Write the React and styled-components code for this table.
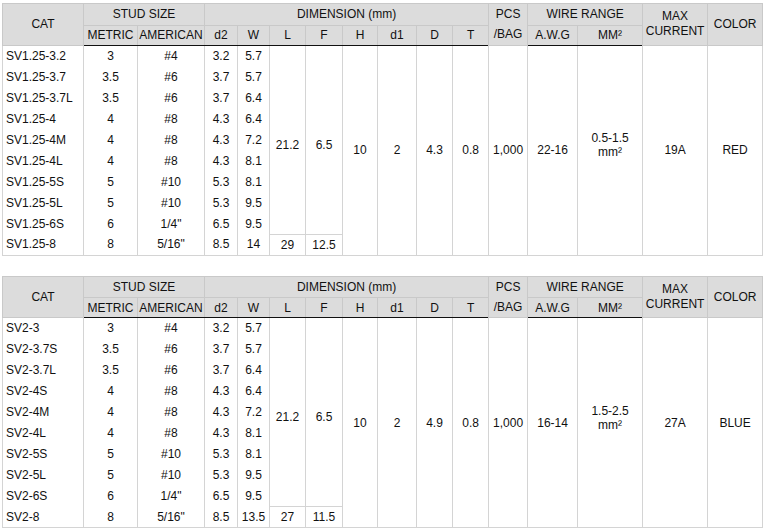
import React from 'react';
import styled, { createGlobalStyle } from 'styled-components';

const GlobalStyle = createGlobalStyle`
  body {
    margin: 0;
    background: #fff;
    font-family: "Liberation Sans", Arial, sans-serif;
    color: #111;
  }
`;

const Page = styled.div`
  display: flex;
  flex-direction: column;
  gap: 20px;
  padding: 3px 0 0 2px;
`;

const Table = styled.table`
  width: 760px;
  table-layout: fixed;
  border-collapse: collapse;
  font-size: 12px;
  line-height: 14px;
`;

const HeadCell = styled.th`
  background: #dcdcdc;
  border: 1px solid #c9c9c9;
  font-weight: normal;
  text-align: center;
  vertical-align: middle;
  padding: 0;
  height: ${(p) => (p.$top ? 20.5 : 19)}px;
  line-height: ${(p) => p.$lh || 14}px;
`;

const HeadRow = styled.tr`
  &:last-child th {
    border-bottom: 1.5px solid #111;
  }
`;

const Row = styled.tr`
  height: 21px;
`;

const Cell = styled.td`
  border: 1px solid #d4d4d4;
  border-top: ${(p) => (p.$cap ? '1px solid #d4d4d4' : 'none')};
  border-bottom: ${(p) => (p.$end ? '1px solid #d4d4d4' : 'none')};
  text-align: ${(p) => (p.$left ? 'left' : 'center')};
  padding: ${(p) => (p.$left ? '0 0 0 3px' : '0')};
  padding-top: ${(p) => p.$shift || 0}px;
  padding-bottom: ${(p) => p.$lift || 0}px;
  vertical-align: middle;
  white-space: nowrap;
`;

const widths = [81, 54, 67, 33, 32, 36, 37, 35, 39, 36, 36, 39, 50, 65, 65, 55];

const specs = [
  {
    rows: [
      ['SV1.25-3.2', '3', '#4', '3.2', '5.7'],
      ['SV1.25-3.7', '3.5', '#6', '3.7', '5.7'],
      ['SV1.25-3.7L', '3.5', '#6', '3.7', '6.4'],
      ['SV1.25-4', '4', '#8', '4.3', '6.4'],
      ['SV1.25-4M', '4', '#8', '4.3', '7.2'],
      ['SV1.25-4L', '4', '#8', '4.3', '8.1'],
      ['SV1.25-5S', '5', '#10', '5.3', '8.1'],
      ['SV1.25-5L', '5', '#10', '5.3', '9.5'],
      ['SV1.25-6S', '6', '1/4"', '6.5', '9.5'],
      ['SV1.25-8', '8', '5/16"', '8.5', '14', '29', '12.5'],
    ],
    L: '21.2',
    F: '6.5',
    merged: ['10', '2', '4.3', '0.8', '1,000', '22-16'],
    mm: '0.5-1.5',
    current: '19A',
    color: 'RED',
  },
  {
    rows: [
      ['SV2-3', '3', '#4', '3.2', '5.7'],
      ['SV2-3.7S', '3.5', '#6', '3.7', '5.7'],
      ['SV2-3.7L', '3.5', '#6', '3.7', '6.4'],
      ['SV2-4S', '4', '#8', '4.3', '6.4'],
      ['SV2-4M', '4', '#8', '4.3', '7.2'],
      ['SV2-4L', '4', '#8', '4.3', '8.1'],
      ['SV2-5S', '5', '#10', '5.3', '8.1'],
      ['SV2-5L', '5', '#10', '5.3', '9.5'],
      ['SV2-6S', '6', '1/4"', '6.5', '9.5'],
      ['SV2-8', '8', '5/16"', '8.5', '13.5', '27', '11.5'],
    ],
    L: '21.2',
    F: '6.5',
    merged: ['10', '2', '4.9', '0.8', '1,000', '16-14'],
    mm: '1.5-2.5',
    current: '27A',
    color: 'BLUE',
  },
];

const SpecTable = ({ spec }) => {
  const n = spec.rows.length;
  return (
    <Table>
      <colgroup>
        {widths.map((w, i) => (
          <col key={i} style={{ width: w }} />
        ))}
      </colgroup>
      <thead>
        <HeadRow>
          <HeadCell $top rowSpan={2}>CAT</HeadCell>
          <HeadCell $top colSpan={2}>STUD SIZE</HeadCell>
          <HeadCell $top colSpan={8}>DIMENSION (mm)</HeadCell>
          <HeadCell $top rowSpan={2} $lh={20}>
            PCS
            <br />
            /BAG
          </HeadCell>
          <HeadCell $top colSpan={2}>WIRE RANGE</HeadCell>
          <HeadCell $top rowSpan={2} $lh={15}>
            MAX
            <br />
            CURRENT
          </HeadCell>
          <HeadCell $top rowSpan={2}>COLOR</HeadCell>
        </HeadRow>
        <HeadRow>
          <HeadCell>METRIC</HeadCell>
          <HeadCell>AMERICAN</HeadCell>
          <HeadCell>d2</HeadCell>
          <HeadCell>W</HeadCell>
          <HeadCell>L</HeadCell>
          <HeadCell>F</HeadCell>
          <HeadCell>H</HeadCell>
          <HeadCell>d1</HeadCell>
          <HeadCell>D</HeadCell>
          <HeadCell>T</HeadCell>
          <HeadCell>A.W.G</HeadCell>
          <HeadCell>MM²</HeadCell>
        </HeadRow>
      </thead>
      <tbody>
        {spec.rows.map((r, i) => {
          const last = i === n - 1;
          return (
            <Row key={r[0]}>
              <Cell $left $end={last}>{r[0]}</Cell>
              <Cell $end={last}>{r[1]}</Cell>
              <Cell $end={last}>{r[2]}</Cell>
              <Cell $end={last}>{r[3]}</Cell>
              <Cell $end={last}>{r[4]}</Cell>
              {i === 0 && (
                <>
                  <Cell rowSpan={n - 1} $shift={10}>
                    {spec.L}
                  </Cell>
                  <Cell rowSpan={n - 1} $shift={10}>
                    {spec.F}
                  </Cell>
                  {spec.merged.map((v, k) => (
                    <Cell key={k} rowSpan={n} $end>
                      {v}
                    </Cell>
                  ))}
                  <Cell rowSpan={n} $end $lift={10}>
                    {spec.mm}
                    <br />
                    mm²
                  </Cell>
                  <Cell rowSpan={n} $end>{spec.current}</Cell>
                  <Cell rowSpan={n} $end>{spec.color}</Cell>
                </>
              )}
              {last && (
                <>
                  <Cell $cap $end>{r[5]}</Cell>
                  <Cell $cap $end>{r[6]}</Cell>
                </>
              )}
            </Row>
          );
        })}
      </tbody>
    </Table>
  );
};

export default function App() {
  return (
    <>
      <GlobalStyle />
      <Page>
        {specs.map((s) => (
          <SpecTable key={s.color} spec={s} />
        ))}
      </Page>
    </>
  );
}
